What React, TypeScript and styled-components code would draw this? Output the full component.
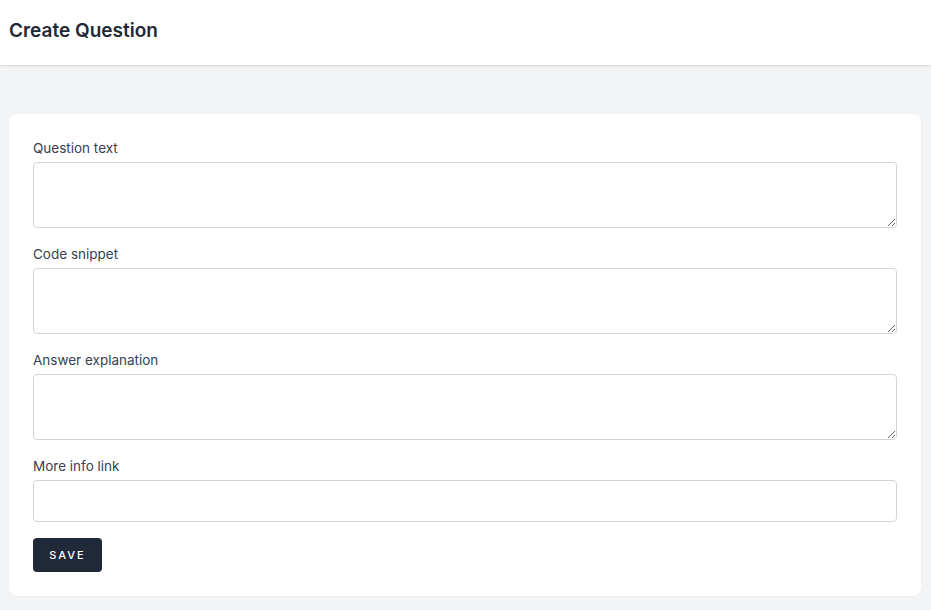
import React from 'react'
import styled, { createGlobalStyle } from 'styled-components'

const GlobalStyle = createGlobalStyle`
  * {
    box-sizing: border-box;
  }
  body {
    margin: 0;
    background: #f3f4f6;
    font-family: 'Inter', 'Lato', sans-serif;
    color: #1f2937;
  }
`

const fields = [
  { label: 'Question text', multiline: true },
  { label: 'Code snippet', multiline: true },
  { label: 'Answer explanation', multiline: true },
  { label: 'More info link', multiline: false }
]

const App: React.FC = () => {
  return (
    <Page>
      <GlobalStyle />
      <Header>
        <Title>Create Question</Title>
      </Header>
      <Main>
        <Card>
          {fields.map((f) => (
            <Field key={f.label}>
              <Label>{f.label}</Label>
              {f.multiline ? <TextArea /> : <Input type="text" />}
            </Field>
          ))}
          <Button>Save</Button>
        </Card>
      </Main>
    </Page>
  )
}

export default App

const Page = styled.div`
  min-height: 100vh;
  display: flex;
  flex-direction: column;
`

const Header = styled.header`
  background: #ffffff;
  height: 65px;
  display: flex;
  align-items: center;
  padding: 0 9px 4px;
  box-shadow: 0 1px 3px 0 rgba(0, 0, 0, 0.1), 0 1px 2px -1px rgba(0, 0, 0, 0.1);
`

const Title = styled.h1`
  margin: 0;
  font-size: 19px;
  font-weight: 600;
  letter-spacing: 0;
  color: #1f2937;
`

const Main = styled.main`
  padding: 49px 10px 14px 9px;
`

const Card = styled.div`
  background: #ffffff;
  border-radius: 8px;
  padding: 24px;
  display: flex;
  flex-direction: column;
  box-shadow: 0 1px 2px rgba(0, 0, 0, 0.04);
`

const Field = styled.div`
  display: flex;
  flex-direction: column;
  margin-bottom: 16px;
`

const Label = styled.label`
  font-size: 13.5px;
  line-height: 20px;
  color: #374151;
  margin-bottom: 4px;
`

const TextArea = styled.textarea`
  height: 66px;
  width: 100%;
  border: 1px solid #d1d5db;
  border-radius: 4px;
  padding: 8px 12px;
  font-family: inherit;
  font-size: 14px;
  resize: vertical;
  outline: none;
`

const Input = styled.input`
  height: 42px;
  width: 100%;
  border: 1px solid #d1d5db;
  border-radius: 4px;
  padding: 8px 12px;
  font-family: inherit;
  font-size: 14px;
  outline: none;
`

const Button = styled.button`
  align-self: flex-start;
  width: 69px;
  height: 34px;
  border: none;
  border-radius: 4px;
  background: #1f2937;
  color: #ffffff;
  font-family: inherit;
  font-size: 11px;
  font-weight: 500;
  letter-spacing: 2px;
  text-transform: uppercase;
  cursor: pointer;
`
